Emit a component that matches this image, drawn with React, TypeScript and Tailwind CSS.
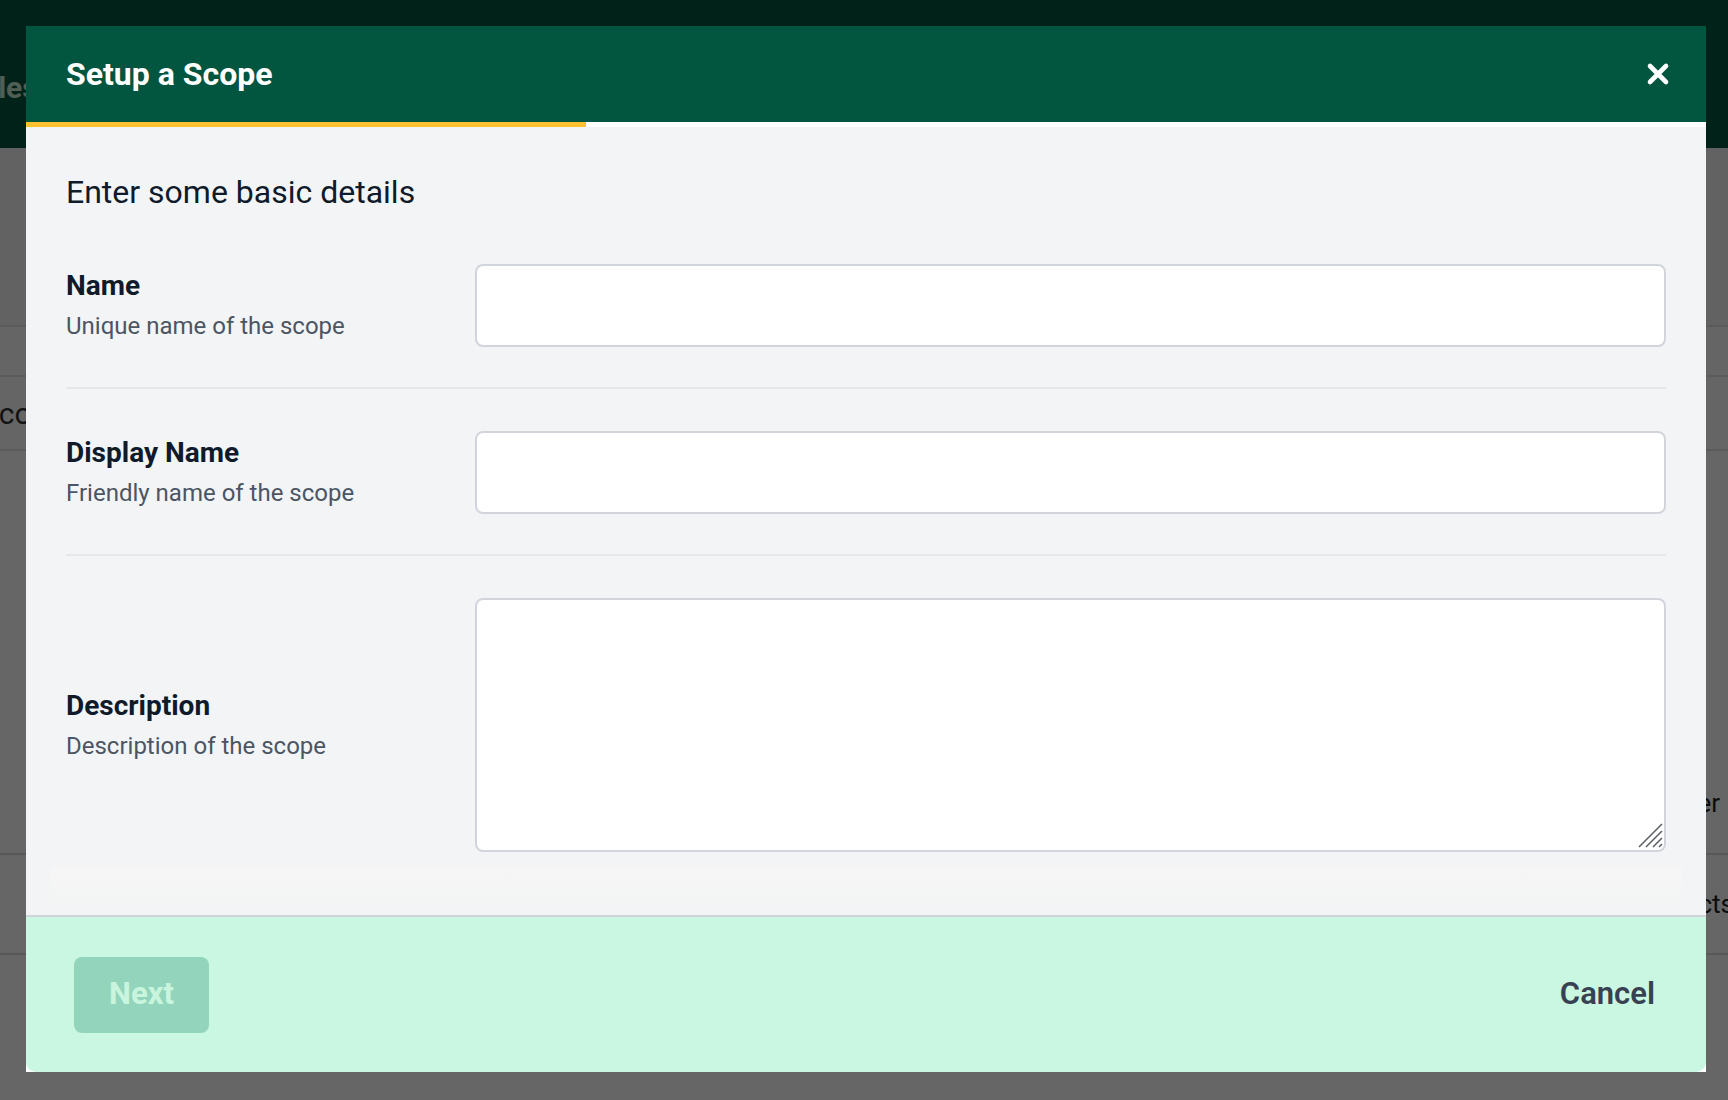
import React from "react";

const fields = [
  { label: "Name", hint: "Unique name of the scope", kind: "input" },
  { label: "Display Name", hint: "Friendly name of the scope", kind: "input" },
  { label: "Description", hint: "Description of the scope", kind: "textarea" },
] as const;

function CloseIcon() {
  return (
    <svg width="24" height="24" viewBox="0 0 24 24" fill="none">
      <path
        d="M4 4L20 20M20 4L4 20"
        stroke="white"
        strokeWidth="4.6"
        strokeLinecap="round"
      />
    </svg>
  );
}

function ResizeGrip() {
  return (
    <svg
      className="pointer-events-none absolute bottom-[4px] right-[3px]"
      width="25"
      height="25"
      viewBox="0 0 25 25"
      fill="none"
    >
      <path
        d="M1 24L24 1M8 24L24 8M15 24L24 15M21 24L24 21"
        stroke="#5f6368"
        strokeWidth="1.6"
      />
    </svg>
  );
}

function FieldRow({
  label,
  hint,
  kind,
  last,
  first,
}: {
  label: string;
  hint: string;
  kind: "input" | "textarea";
  last: boolean;
  first: boolean;
}) {
  return (
    <div
      className={
        "flex items-center " +
        (first ? "pt-0 " : "pt-[42px] ") +
        (last ? "pb-0" : "pb-[40px] border-b-2 border-[#e5e7eb]")
      }
    >
      <div className="w-[409px] shrink-0">
        <div className="text-[28px] font-bold leading-[32px] text-[#0f1a2a]">
          {label}
        </div>
        <div className="mt-[9px] text-[24px] leading-[30px] text-[#4b5563]">
          {hint}
        </div>
      </div>
      {kind === "input" ? (
        <input
          type="text"
          className="h-[83px] flex-1 rounded-[8px] border-2 border-[#d1d5db] bg-white px-4 text-[22px] outline-none"
        />
      ) : (
        <div className="relative flex-1">
          <textarea className="block h-[254px] w-full resize-none rounded-[8px] border-2 border-[#d1d5db] bg-white px-4 py-3 text-[22px] outline-none" />
          <ResizeGrip />
        </div>
      )}
    </div>
  );
}

export default function App() {
  return (
    <div className="relative h-[1100px] w-[1728px] overflow-hidden bg-white font-['Roboto','Liberation_Sans',sans-serif]">
      {/* page underneath the dialog */}
      <div className="flex h-full flex-col">
        <div className="flex h-[148px] items-center bg-[#02553f] pt-[26px]">
          <span className="-ml-[38px] text-[30px] font-bold text-[#c8ecd8]">
            Roles
          </span>
        </div>
        <div className="h-[179px] border-b-2 border-[#e3e3e3] bg-[#f6f6f6]" />
        <div className="h-[50px] border-b-2 border-[#e3e3e3] bg-[#fdfdfd]" />
        <div className="flex h-[74px] items-center border-b-2 border-[#e3e3e3] bg-[#fdfdfd]">
          <span className="-ml-[19px] text-[30px] text-[#333]">Scopes</span>
        </div>
        <div className="flex h-[404px] items-end justify-end border-b-2 border-[#dcdcdc] pb-[30px] pr-[8px]">
          <span className="text-[26px] text-[#222]">Owner</span>
        </div>
        <div className="flex h-[100px] items-center justify-end border-b-2 border-[#dcdcdc]">
          <span className="-mr-[6px] text-[26px] text-[#222]">Contacts</span>
        </div>
        <div className="flex-1" />
      </div>

      <div className="absolute inset-0 bg-black/60" />

      {/* dialog */}
      <div className="absolute left-[26px] top-[26px] flex w-[1680px] flex-col bg-white">
        <div className="flex h-[96px] items-center justify-between bg-[#02553f] pl-10 pr-[36px]">
          <h1 className="text-[32px] font-bold text-white">Setup a Scope</h1>
          <button className="flex items-center justify-center">
            <CloseIcon />
          </button>
        </div>
        <div className="flex h-[5px] bg-white">
          <div className="w-1/3 bg-[#fbc12f]" />
        </div>

        <div className="bg-[#f3f4f6] px-10 pt-[46px] pb-[11px]">
          <h2 className="text-[32px] leading-[38px] text-[#0f1a2a]">
            Enter some basic details
          </h2>
          <div className="mt-[53px]">
            {fields.map((f, i) => (
              <FieldRow
                key={f.label}
                label={f.label}
                hint={f.hint}
                kind={f.kind}
                first={i === 0}
                last={i === fields.length - 1}
              />
            ))}
          </div>
          <div className="-mx-[16px] mt-[15px] h-[37px] bg-gradient-to-b from-[#f5f6f5] to-[#f3f4f4]" />
        </div>

        <div className="flex h-[157px] items-center justify-between rounded-b-[10px] border-t-2 border-[#d1d5db] bg-[#c9f7e1] pl-12 pr-[51px]">
          <button className="h-[76px] w-[135px] rounded-[8px] bg-[#93d5bc] text-[31px] font-bold text-[#c9f5df]">
            Next
          </button>
          <button className="text-[31px] font-semibold text-[#374151]">
            Cancel
          </button>
        </div>
      </div>
    </div>
  );
}
